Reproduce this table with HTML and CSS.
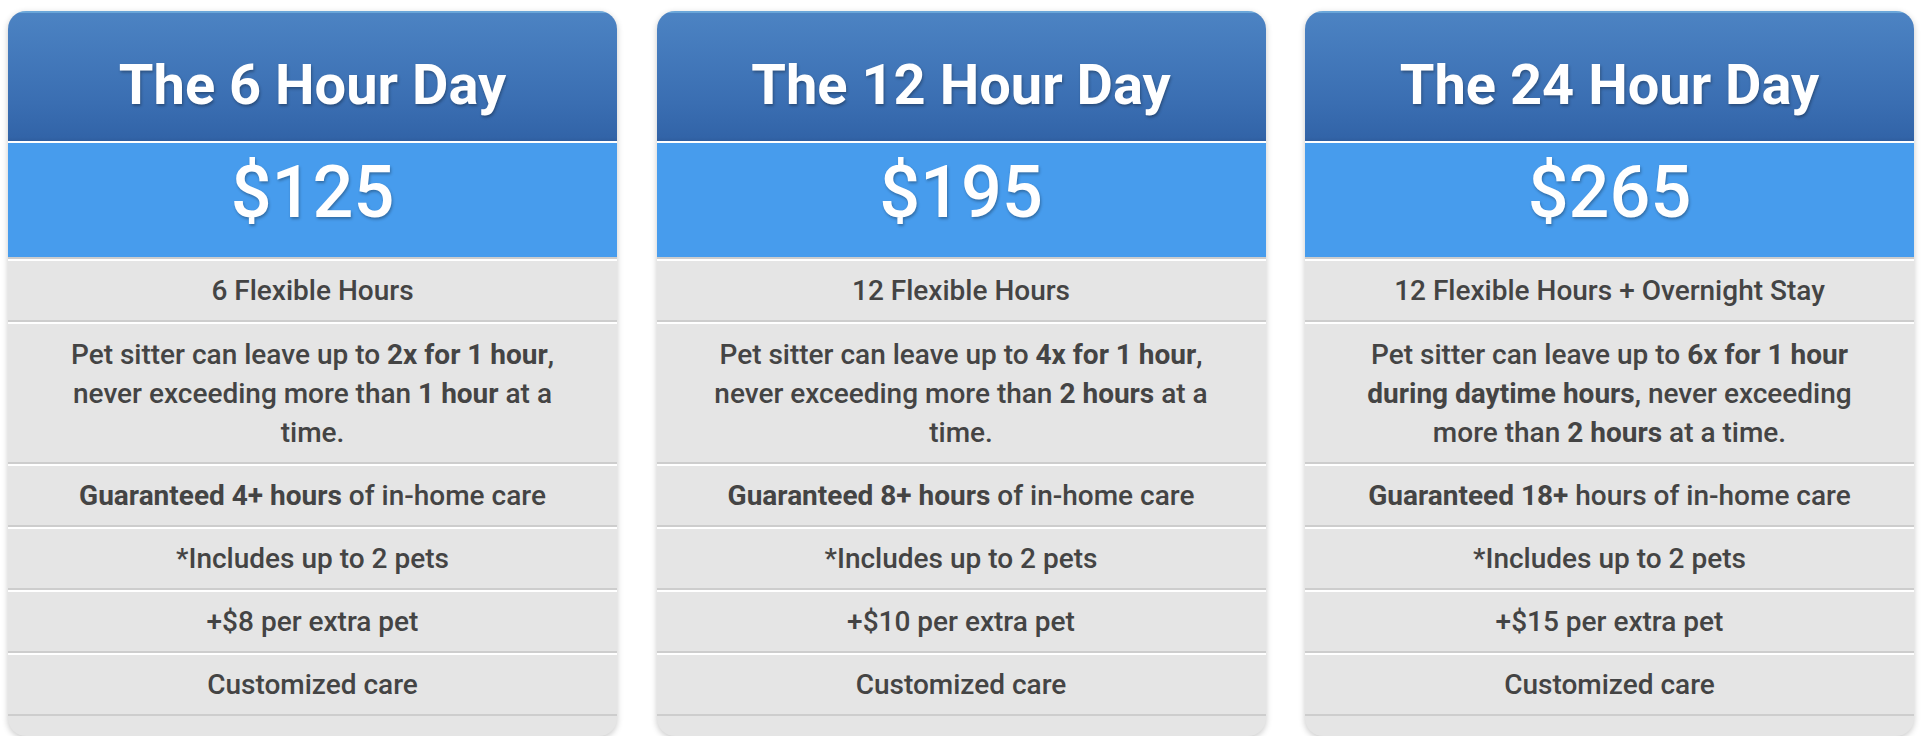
FILE: index.html
```html
<!DOCTYPE html>
<html lang="en">
<head>
<meta charset="utf-8">
<title>Pet Sitting Pricing</title>
<link rel="stylesheet" href="styles.css">
</head>
<body>
<main class="pricing">
  <section class="card">
    <h2 class="card-head">The 6 Hour Day</h2>
    <div class="price">$125</div>
    <ul class="features">
      <li>6 Flexible Hours</li>
      <li class="multi">Pet sitter can leave up to <strong>2x for 1 hour</strong>, never exceeding more than <strong>1 hour</strong> at a time.</li>
      <li><strong>Guaranteed 4+ hours</strong> of in-home care</li>
      <li>*Includes up to 2 pets</li>
      <li>+$8 per extra pet</li>
      <li>Customized care</li>
    </ul>
    <div class="card-foot"></div>
  </section>
  <section class="card">
    <h2 class="card-head">The 12 Hour Day</h2>
    <div class="price">$195</div>
    <ul class="features">
      <li>12 Flexible Hours</li>
      <li class="multi">Pet sitter can leave up to <strong>4x for 1 hour</strong>, never exceeding more than <strong>2 hours</strong> at a time.</li>
      <li><strong>Guaranteed 8+ hours</strong> of in-home care</li>
      <li>*Includes up to 2 pets</li>
      <li>+$10 per extra pet</li>
      <li>Customized care</li>
    </ul>
    <div class="card-foot"></div>
  </section>
  <section class="card">
    <h2 class="card-head">The 24 Hour Day</h2>
    <div class="price">$265</div>
    <ul class="features">
      <li>12 Flexible Hours + Overnight Stay</li>
      <li class="multi">Pet sitter can leave up to <strong>6x for 1 hour during daytime hours</strong>, never exceeding more than <strong>2 hours</strong> at a time.</li>
      <li><strong>Guaranteed 18+</strong> hours of in-home care</li>
      <li>*Includes up to 2 pets</li>
      <li>+$15 per extra pet</li>
      <li>Customized care</li>
    </ul>
    <div class="card-foot"></div>
  </section>
</main>
</body>
</html>
```
FILE: styles.css
```css
* { box-sizing: border-box; }

body {
  margin: 0;
  background: #ffffff;
  font-family: Roboto, "Liberation Sans", Arial, sans-serif;
}

.pricing {
  display: flex;
  gap: 39.5px;
  padding: 11px 0 0 8px;
}

.card {
  width: 609px;
  flex: 0 0 609px;
  border-radius: 18px;
  overflow: hidden;
  background: #e5e5e5;
  box-shadow: 0 2px 6px rgba(0, 0, 0, 0.22);
}

.card-head {
  margin: 0;
  height: 132px;
  padding-top: 16px;
  display: flex;
  align-items: center;
  justify-content: center;
  border-top: 2px solid #6aa6d9;
  border-bottom: 2px solid #ffffff;
  background: linear-gradient(to bottom, #4c83c3 0%, #3a6eb2 70%, #3264a8 97%, #2f5e9f 100%);
  color: #ffffff;
  font-size: 56px;
  font-weight: 700;
  letter-spacing: 0;
  text-shadow: 1px 2px 3px rgba(0, 0, 0, 0.3);
}

.price {
  height: 116px;
  padding-bottom: 15px;
  display: flex;
  align-items: center;
  justify-content: center;
  background: #479ced;
  border-bottom: 2px solid #cdcdcd;
  color: #ffffff;
  font-size: 72px;
  font-weight: 500;
  text-shadow: 1px 2px 3px rgba(0, 0, 0, 0.3);
}

.features {
  list-style: none;
  margin: 0;
  padding: 0;
}

.features li {
  padding: 10px 52px;
  border-top: 2px solid #ffffff;
  border-bottom: 2px solid #cdcdcd;
  text-align: center;
  color: #444444;
  font-size: 28px;
  font-weight: 500;
  line-height: 39px;
}

.features li.multi {
  padding: 10.5px 52px;
}

.features strong {
  font-weight: 700;
}

.card-foot {
  height: 20px;
}
```
